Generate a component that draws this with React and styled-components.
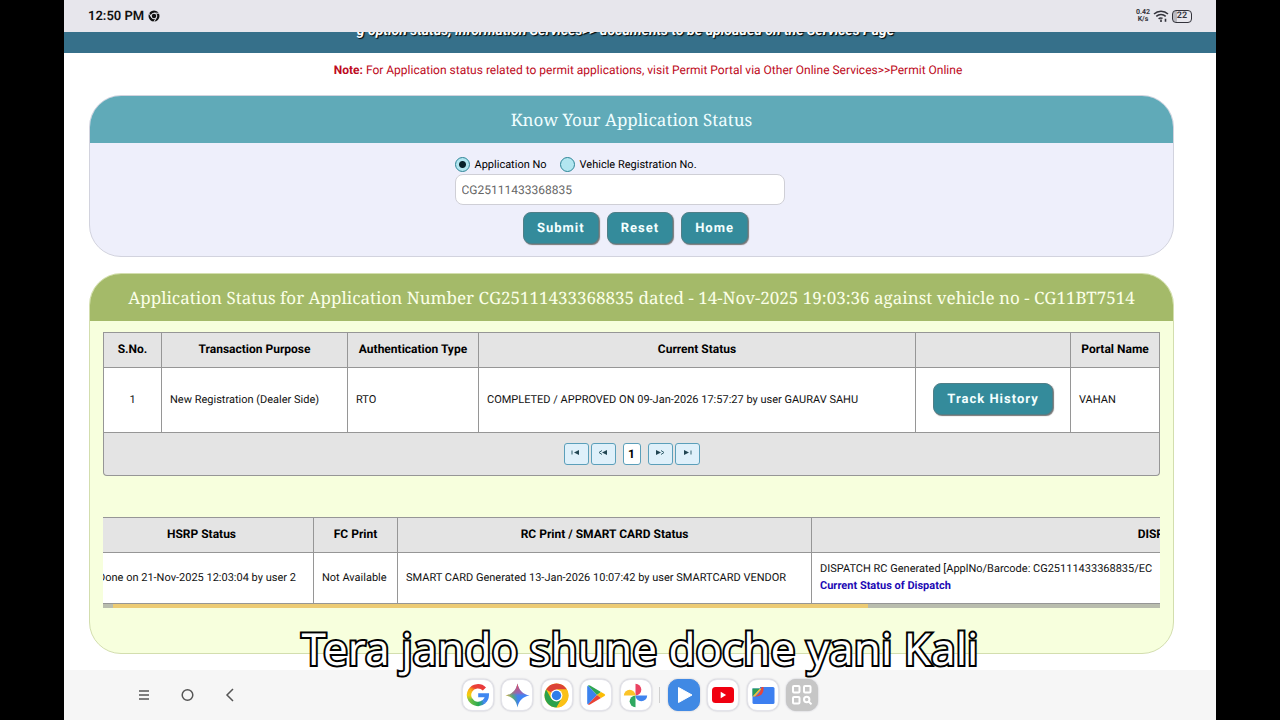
import React, { useLayoutEffect, useRef, useState } from "react";
import styled, { createGlobalStyle } from "styled-components";

const GlobalStyle = createGlobalStyle`
  * {
    box-sizing: border-box;
  }
  body {
    margin: 0;
    background: #000;
    font-family: Roboto, "Liberation Sans", sans-serif;
    font-size: 12px;
    line-height: 16px;
    color: #111;
    text-rendering: geometricPrecision;
  }
  button, input {
    font-family: inherit;
    text-rendering: inherit;
  }
`;

const dispatchColumns = [
  { title: "HSRP Status", width: 224 },
  { title: "FC Print", width: 84 },
  { title: "RC Print / SMART CARD Status", width: 414 },
  { title: "DISPATCH STATUS", width: 756 },
];
const dispatchWidth = dispatchColumns.reduce((sum, c) => sum + c.width, 0);

const ChromeMark = () => (
  <svg width="12" height="12" viewBox="0 0 24 24">
    <circle cx="12" cy="12" r="11" fill="#111" />
    <circle cx="12" cy="12" r="5.6" fill="none" stroke="#e7e6ec" strokeWidth="2" />
    <path d="M12 6.4h10M7.2 15L2.3 6.6M16.8 15l-4.9 8.6" stroke="#e7e6ec" strokeWidth="2" />
  </svg>
);

const WifiMark = () => (
  <svg width="16" height="14" viewBox="0 0 16 14" fill="none" stroke="#33333b">
    <path d="M1 5a10 10 0 0 1 14 0M3.3 7.4a6.8 6.8 0 0 1 9.4 0M5.6 9.8a3.6 3.6 0 0 1 4 -.4" strokeWidth="1.5" />
    <path d="M8 10.5v2.4M12.5 9.8v3" strokeWidth="1.6" />
  </svg>
);

const GoogleIcon = () => (
  <svg width="24" height="24" viewBox="0 0 24 24" fill="none" strokeWidth="4.4">
    <defs>
      <linearGradient id="gTop" x1="0" y1="0.6" x2="1" y2="0">
        <stop offset="0" stopColor="#f9a01b" />
        <stop offset="0.35" stopColor="#ea4335" />
        <stop offset="1" stopColor="#e8383d" />
      </linearGradient>
      <linearGradient id="gLeft" x1="0" y1="0" x2="0" y2="1">
        <stop offset="0" stopColor="#fbb416" />
        <stop offset="0.5" stopColor="#f5cf0d" />
        <stop offset="1" stopColor="#7fc241" />
      </linearGradient>
      <linearGradient id="gBottom" x1="0" y1="0" x2="1" y2="0">
        <stop offset="0" stopColor="#6fbe44" />
        <stop offset="0.6" stopColor="#27ab52" />
        <stop offset="1" stopColor="#3a86e8" />
      </linearGradient>
    </defs>
    <path d="M18.4 6.1A9 9 0 0 0 4.2 7.6" stroke="url(#gTop)" />
    <path d="M4.4 7.3A9 9 0 0 0 4.6 17" stroke="url(#gLeft)" />
    <path d="M4.4 16.7A9 9 0 0 0 18 18.7" stroke="url(#gBottom)" />
    <path d="M12.2 12.2h8.8a9 9 0 0 1-3.2 6.6" stroke="#3f86f0" strokeWidth="4" />
  </svg>
);

const GeminiIcon = () => (
  <svg width="25" height="25" viewBox="0 0 24 24">
    <defs>
      <linearGradient id="gem" x1="0" y1="0.5" x2="1" y2="0.4">
        <stop offset="0" stopColor="#f0c22c" />
        <stop offset="0.3" stopColor="#54a877" />
        <stop offset="0.5" stopColor="#3f82f2" />
        <stop offset="1" stopColor="#3b86fb" />
      </linearGradient>
      <linearGradient id="gemTop" x1="0" y1="0" x2="0" y2="1">
        <stop offset="0" stopColor="#ee4747" />
        <stop offset="0.4" stopColor="#c65590" stopOpacity="0.6" />
        <stop offset="0.55" stopColor="#4285f4" stopOpacity="0" />
      </linearGradient>
    </defs>
    <path d="M12 .5C13.2 7 17 10.8 23.5 12 17 13.2 13.2 17 12 23.5 10.8 17 7 13.2 .5 12 7 10.8 10.8 7 12 .5z" fill="url(#gem)" />
    <path d="M12 .5C13.2 7 17 10.8 23.5 12 17 13.2 13.2 17 12 23.5 10.8 17 7 13.2 .5 12 7 10.8 10.8 7 12 .5z" fill="url(#gemTop)" />
  </svg>
);

const ChromeIcon = () => (
  <svg width="25" height="25" viewBox="0 0 24 24">
    <circle cx="12" cy="12" r="11.5" fill="#fbc116" />
    <path d="M12 12L2 6.3A11.5 11.5 0 0 1 22 6.3H12z" fill="#dc4437" />
    <path d="M2 6.3L7 15l5 2.7-2 5.6A11.5 11.5 0 0 1 2 6.3z" fill="#2ba24c" />
    <path d="M7 15l5 2.7 5-2.8-5 8.6-2-.2z" fill="#2ba24c" />
    <path d="M17 15l-5 8.5A11.5 11.5 0 0 0 22 6.3H12z" fill="#fbc116" />
    <circle cx="12" cy="12" r="5.7" fill="#fff" />
    <circle cx="12" cy="12" r="4.5" fill="#2f7de9" />
  </svg>
);

const PlayStoreIcon = () => (
  <svg width="24" height="24" viewBox="0 0 24 24">
    <path d="M4 2.5L13 12 4 21.5Q3.2 21 3.2 20V4Q3.2 3 4 2.5z" fill="#3b82ee" />
    <path d="M4 2.5Q4.8 1.9 6 2.6L17 9l-4 3z" fill="#2fa652" />
    <path d="M17 9l3.5 2q1.5 1 0 2L17 15l-4-3z" fill="#fbbc04" />
    <path d="M4 21.5Q4.8 22.1 6 21.4L17 15l-4-3z" fill="#e94335" />
  </svg>
);

const PhotosIcon = () => (
  <svg width="25" height="25" viewBox="0 0 24 24">
    <path d="M12 .8a5.6 5.6 0 0 1 0 11.2z" fill="#ea4262" />
    <path d="M23.2 12a5.6 5.6 0 0 1-11.2 0z" fill="#3f84ef" />
    <path d="M12 23.2A5.6 5.6 0 0 1 12 12z" fill="#2fa860" />
    <path d="M.8 12A5.6 5.6 0 0 1 12 12z" fill="#fbc328" />
  </svg>
);

const VideoIcon = () => (
  <svg width="24" height="24" viewBox="0 0 24 24">
    <path d="M6.5 4.5v15L20 12z" fill="#fff" stroke="#fff" strokeLinejoin="round" />
  </svg>
);

const YoutubeIcon = () => (
  <svg width="24" height="24" viewBox="0 0 24 24">
    <rect x="1" y="4" width="22" height="16" rx="3.5" fill="#f00010" />
    <path d="M9.7 8.8v6.4l5.4-3.2z" fill="#fff" />
  </svg>
);

const FilesIcon = () => (
  <svg width="24" height="24" viewBox="0 0 24 24">
    <rect x="1.5" y="4" width="22" height="17" rx="1.5" fill="#3d7ff0" />
    <path d="M1 3.5h8v2H1z" fill="#fff" />
    <path d="M1.5 5.500h7.500L1.5 13.500z" fill="#2a9d55" />
    <path d="M1.5 13.500L9 5.500h2L4 13.500z" fill="#fbc02d" />
    <path d="M4 13.500q5.500-2 6.500-9.500h2v3q-.5 5.500-6.500 6.500z" fill="#e8453a" />
  </svg>
);

const FinderIcon = () => (
  <svg width="22" height="22" viewBox="0 0 22 22" fill="none" stroke="#fff" strokeWidth="2">
    <rect x="2" y="2" width="6.5" height="6.5" rx="1" />
    <rect x="13" y="2" width="6.5" height="6.5" rx="1" />
    <rect x="2" y="13" width="6.5" height="6.5" rx="1" />
    <circle cx="15.7" cy="15.5" r="2.7" />
    <path d="M17.6 17.5l2.9 2.9" />
  </svg>
);

const arrows = {
  first: { line: "M1 .5v4", solid: "M8 0L3 2.5l5 2.5z" },
  prev: { line: "M4 .5L1 2.5l3 2", solid: "M9 0L4 2.5l5 2.5z" },
  next: { line: "M6 .5l3 2-3 2", solid: "M1 0l5 2.5L1 5z" },
  last: { line: "M9 .5v4", solid: "M2 0l5 2.5L2 5z" },
};

const PageArrow = ({ kind, label }) => (
  <PageButton type="button" aria-label={label}>
    <svg width="10" height="5" viewBox="0 0 10 5">
      <path d={arrows[kind].line} fill="none" stroke="#35606e" />
      <path d={arrows[kind].solid} fill="#234653" />
    </svg>
  </PageButton>
);

const StatusTable = () => (
  <div>
    <Table>
      <colgroup>
        <col style={{ width: "58px" }} />
        <col style={{ width: "186px" }} />
        <col style={{ width: "131px" }} />
        <col />
        <col style={{ width: "155px" }} />
        <col style={{ width: "89px" }} />
      </colgroup>
      <thead>
        <tr>
          <th>S.No.</th>
          <th>Transaction Purpose</th>
          <th>Authentication Type</th>
          <th>Current Status</th>
          <th></th>
          <th>Portal Name</th>
        </tr>
      </thead>
      <tbody>
        <TallRow>
          <Cell $center>1</Cell>
          <Cell>New Registration (Dealer Side)</Cell>
          <Cell>RTO</Cell>
          <Cell>COMPLETED / APPROVED ON 09-Jan-2026 17:57:27 by user GAURAV SAHU</Cell>
          <Cell $center>
            <ActionButton type="button">Track History</ActionButton>
          </Cell>
          <Cell>VAHAN</Cell>
        </TallRow>
      </tbody>
    </Table>
    <Paginator>
      <PageArrow kind="first" label="First page" />
      <PageArrow kind="prev" label="Previous page" />
      <CurrentPage type="button">1</CurrentPage>
      <PageArrow kind="next" label="Next page" />
      <PageArrow kind="last" label="Last page" />
    </Paginator>
  </div>
);

const DispatchTable = () => {
  const scroller = useRef(null);
  const [thumb, setThumb] = useState({ left: 0, width: 0 });

  const update = () => {
    const el = scroller.current;
    setThumb({
      left: (el.scrollLeft / el.scrollWidth) * 100,
      width: (el.clientWidth / el.scrollWidth) * 100,
    });
  };

  useLayoutEffect(() => {
    scroller.current.scrollLeft = 14;
    update();
  }, []);

  return (
    <Dispatch>
      <Scroller ref={scroller} onScroll={update}>
        <Table style={{ width: `${dispatchWidth}px` }}>
          <colgroup>
            {dispatchColumns.map((c) => (
              <col key={c.title} style={{ width: `${c.width}px` }} />
            ))}
          </colgroup>
          <thead>
            <tr>
              {dispatchColumns.map((c) => (
                <th key={c.title}>{c.title}</th>
              ))}
            </tr>
          </thead>
          <tbody>
            <ShortRow>
              <Cell>Done on 21-Nov-2025 12:03:04 by user 2</Cell>
              <Cell>Not Available</Cell>
              <Cell>SMART CARD Generated 13-Jan-2026 10:07:42 by user SMARTCARD VENDOR</Cell>
              <Cell>
                DISPATCH RC Generated [ApplNo/Barcode: CG25111433368835/EC
                <DispatchLink href="#dispatch">Current Status of Dispatch</DispatchLink>
              </Cell>
            </ShortRow>
          </tbody>
        </Table>
      </Scroller>
      <Track>
        <Thumb style={{ marginLeft: `${thumb.left}%`, width: `${thumb.width}%` }} />
      </Track>
    </Dispatch>
  );
};

const App = () => {
  const [mode, setMode] = useState("application");

  return (
    <Device>
      <GlobalStyle />
      <StatusBar>
        <Clock>
          12:50 PM <ChromeMark />
        </Clock>
        <Signals>
          <Speed>
            0.42
            <br />
            K/s
          </Speed>
          <WifiMark />
          <Battery>22</Battery>
        </Signals>
      </StatusBar>
      <Banner>
        <BannerText>
          g option status, information Services&gt;&gt; documents to be uploaded on the Services Page
        </BannerText>
      </Banner>
      <Content>
        <Note>
          <b>Note:</b> For Application status related to permit applications, visit Permit Portal via
          Other Online Services&gt;&gt;Permit Online
        </Note>
        <Card $tone="blue">
          <CardTitle $tone="blue">Know Your Application Status</CardTitle>
          <Form onSubmit={(e) => e.preventDefault()}>
            <Radios>
              <RadioLabel>
                <Radio
                  type="radio"
                  name="mode"
                  checked={mode === "application"}
                  onChange={() => setMode("application")}
                />
                Application No
              </RadioLabel>
              <RadioLabel>
                <Radio
                  type="radio"
                  name="mode"
                  checked={mode === "vehicle"}
                  onChange={() => setMode("vehicle")}
                />
                Vehicle Registration No.
              </RadioLabel>
            </Radios>
            <NumberInput aria-label="Application No" defaultValue="CG25111433368835" />
            <Buttons>
              <ActionButton type="submit">Submit</ActionButton>
              <ActionButton type="reset">Reset</ActionButton>
              <ActionButton type="button">Home</ActionButton>
            </Buttons>
          </Form>
        </Card>
        <Card $tone="green">
          <CardTitle $tone="green">
            Application Status for Application Number CG25111433368835 dated - 14-Nov-2025 19:03:36
            against vehicle no - CG11BT7514
          </CardTitle>
          <Results>
            <StatusTable />
            <DispatchTable />
          </Results>
        </Card>
      </Content>
      <NavBar>
        <SystemButtons>
          <SystemButton type="button" aria-label="Recent apps">
            <svg width="12" height="12" viewBox="0 0 12 12" stroke="#555" strokeWidth="1.5">
              <path d="M1 2h10M1 6h10M1 10h10" />
            </svg>
          </SystemButton>
          <SystemButton type="button" aria-label="Home screen">
            <svg width="14" height="14" viewBox="0 0 14 14" fill="none" stroke="#555" strokeWidth="1.5">
              <circle cx="7.5" cy="7" r="5.3" />
            </svg>
          </SystemButton>
          <SystemButton type="button" aria-label="Back">
            <svg width="14" height="14" viewBox="0 0 14 14" fill="none" stroke="#555" strokeWidth="1.5">
              <path d="M10 1L4 7l6 6" />
            </svg>
          </SystemButton>
        </SystemButtons>
        <Dock>
          <AppTile type="button" aria-label="Google"><GoogleIcon /></AppTile>
          <AppTile type="button" aria-label="Gemini"><GeminiIcon /></AppTile>
          <AppTile type="button" aria-label="Chrome"><ChromeIcon /></AppTile>
          <AppTile type="button" aria-label="Play Store"><PlayStoreIcon /></AppTile>
          <AppTile type="button" aria-label="Photos"><PhotosIcon /></AppTile>
          <Divider />
          <AppTile type="button" aria-label="Video" $bg="#4089e4"><VideoIcon /></AppTile>
          <AppTile type="button" aria-label="YouTube"><YoutubeIcon /></AppTile>
          <AppTile type="button" aria-label="Files"><FilesIcon /></AppTile>
          <AppTile type="button" aria-label="App finder" $bg="#c6c6c6"><FinderIcon /></AppTile>
        </Dock>
      </NavBar>
      <Caption>Tera jando shune doche yani Kali</Caption>
    </Device>
  );
};

const tones = {
  blue: { head: "#60aab8", body: "#eeeffb", line: "#d2d3de", text: "#f0feff" },
  green: { head: "#a4ba69", body: "#f7ffdd", line: "#d3deae", text: "#fbffe8" },
};

const Device = styled.div`
  position: relative;
  display: flex;
  flex-direction: column;
  width: 90%;
  min-height: 100vh;
  margin: 0 auto;
  background: #fff;
`;

const StatusBar = styled.header`
  display: flex;
  justify-content: space-between;
  align-items: center;
  height: 32px;
  padding: 0 24px;
  background: #e7e6ec;
`;

const Clock = styled.div`
  display: flex;
  align-items: center;
  gap: 4px;
  font-size: 13px;
  font-weight: 600;
  line-height: 19px;
`;

const Signals = styled.div`
  display: flex;
  align-items: center;
  gap: 3px;
  color: #33333b;
`;

const Speed = styled.div`
  font-size: 7px;
  font-weight: 700;
  line-height: 7px;
  text-align: center;
`;

const Battery = styled.div`
  width: 20px;
  border: 1px solid #33333b;
  border-radius: 4px;
  background: linear-gradient(90deg, #b9b9c0 22%, transparent 22%);
  font-size: 9px;
  font-weight: 600;
  line-height: 11px;
  text-align: center;
`;

const Banner = styled.div`
  display: flex;
  justify-content: center;
  align-items: flex-end;
  height: 21px;
  padding: 0 29px 14px 0;
  overflow: hidden;
  background: #36708a;
`;

const BannerText = styled.div`
  flex: none;
  color: #fff;
  font-size: 14px;
  font-style: italic;
  font-weight: 700;
  white-space: nowrap;
  text-shadow: 1px 1px 1px #000;
`;

const Content = styled.main`
  flex: 1;
  padding: 0 42px 16px 25px;
`;

const Note = styled.p`
  margin: 0;
  padding: 9px 0 17px 33px;
  text-align: center;
  color: #bd0a22;
`;

const Card = styled.section`
  overflow: hidden;
  border: 1px solid ${(p) => tones[p.$tone].line};
  border-radius: 32px;
  background: ${(p) => tones[p.$tone].body};
  & + & {
    margin-top: 16px;
  }
`;

const CardTitle = styled.h2`
  margin: 0;
  padding: 12px 16px;
  background: ${(p) => tones[p.$tone].head};
  color: ${(p) => tones[p.$tone].text};
  font-family: "Noto Serif", "Droid Serif", "DejaVu Serif", serif;
  font-size: 17px;
  font-weight: 400;
  line-height: 23px;
  text-align: center;
`;

const Form = styled.form`
  width: 354px;
  margin: 0 auto;
  padding: 12px 0;
`;

const Radios = styled.div`
  display: flex;
  gap: 13px;
  height: 19px;
  font-size: 11px;
`;

const RadioLabel = styled.label`
  display: flex;
  align-items: center;
  gap: 5px;
  color: #000;
`;

const Radio = styled.input`
  appearance: none;
  width: 15px;
  height: 15px;
  margin: 0;
  border: 1px solid #2b8496;
  border-radius: 50%;
  background: #b2e6f0;
  &:checked {
    background: radial-gradient(circle, #08232b 3px, #b2e6f0 4px);
  }
`;

const NumberInput = styled.input`
  display: block;
  width: 330px;
  height: 31px;
  padding: 0 6px;
  border: 1px solid #cfcfd6;
  border-radius: 8px;
  background: #fff;
  color: #666;
  font-size: 12px;
`;

const Buttons = styled.div`
  display: flex;
  justify-content: center;
  gap: 8px;
  padding: 7px 0 0 8px;
`;

const ActionButton = styled.button`
  height: 32px;
  padding: 0 13px;
  border: 1px solid #4f7f88;
  border-radius: 8px;
  background: #348b9b;
  box-shadow: 1px 1px 1px #777;
  color: #f3ffff;
  font-size: 13px;
  font-weight: 700;
  letter-spacing: 1px;
`;

const Results = styled.div`
  padding: 11px 13px 45px;
`;

const Table = styled.table`
  width: 100%;
  border-collapse: collapse;
  table-layout: fixed;
  background: #fff;
  th {
    height: 35px;
    padding: 0 0 2px;
    border: 1px solid #969696;
    background: #e4e4e4;
    color: #000;
    font-weight: 700;
  }
`;

const Cell = styled.td`
  padding: 0 8px 2px;
  border: 1px solid #969696;
  font-size: 11px;
  line-height: 17px;
  text-align: ${(p) => (p.$center ? "center" : "left")};
  white-space: nowrap;
`;

const TallRow = styled.tr`
  height: 65px;
`;

const ShortRow = styled.tr`
  height: 51px;
`;

const Paginator = styled.div`
  display: flex;
  justify-content: center;
  align-items: center;
  gap: 2px;
  height: 43px;
  border: 1px solid #969696;
  border-top: 0;
  border-radius: 0 0 4px 4px;
  background: #e4e4e4;
`;

const PageButton = styled.button`
  display: flex;
  justify-content: center;
  width: 25px;
  height: 22px;
  padding: 6px 0 0;
  border: 1px solid #5b9fba;
  border-radius: 3px;
  background: #dff0fa;
`;

const CurrentPage = styled(PageButton)`
  width: 18px;
  margin: 0 5px;
  padding: 0;
  align-items: center;
  background: #fff;
  color: #000;
  font-size: 12px;
  font-weight: 700;
`;

const Dispatch = styled.div`
  margin-top: 41px;
`;

const Scroller = styled.div`
  overflow-x: auto;
  scrollbar-width: none;
`;

const DispatchLink = styled.a`
  display: block;
  color: #1c0ab4;
  font-weight: 700;
  text-decoration: none;
`;

const Track = styled.div`
  height: 4px;
  background: #b9bdae;
`;

const Thumb = styled.div`
  height: 100%;
  background: #eccb74;
`;

const NavBar = styled.nav`
  display: grid;
  grid-template-columns: 1fr auto 1fr;
  align-items: center;
  height: 50px;
  background: #f6f6f6;
`;

const SystemButtons = styled.div`
  display: flex;
  gap: 19px;
  padding-left: 68px;
`;

const SystemButton = styled.button`
  display: flex;
  justify-content: center;
  align-items: center;
  width: 24px;
  height: 24px;
  padding: 0;
  border: 0;
  background: none;
`;

const Dock = styled.div`
  display: flex;
  justify-content: space-between;
  align-items: center;
  width: 356px;
`;

const AppTile = styled.button`
  display: flex;
  justify-content: center;
  align-items: center;
  width: 32px;
  height: 32px;
  padding: 0;
  border: 1px solid ${(p) => p.$bg || "#e4e4ea"};
  border-radius: 10px;
  background: ${(p) => p.$bg || "#fff"};
  box-shadow: 0 0 2px #b9b9c4;
`;

const Divider = styled.div`
  width: 1px;
  height: 16px;
  background: #cfcfcf;
`;

/* subtitle laid over the bottom of the page */
const Caption = styled.div`
  position: absolute;
  left: 0;
  right: 0;
  bottom: 42px;
  color: #fff;
  font-family: "Noto Sans", "Open Sans", sans-serif;
  font-size: 44px;
  line-height: 60px;
  text-align: center;
  -webkit-text-stroke: 4px #000;
  paint-order: stroke fill;
  pointer-events: none;
`;

export default App;
